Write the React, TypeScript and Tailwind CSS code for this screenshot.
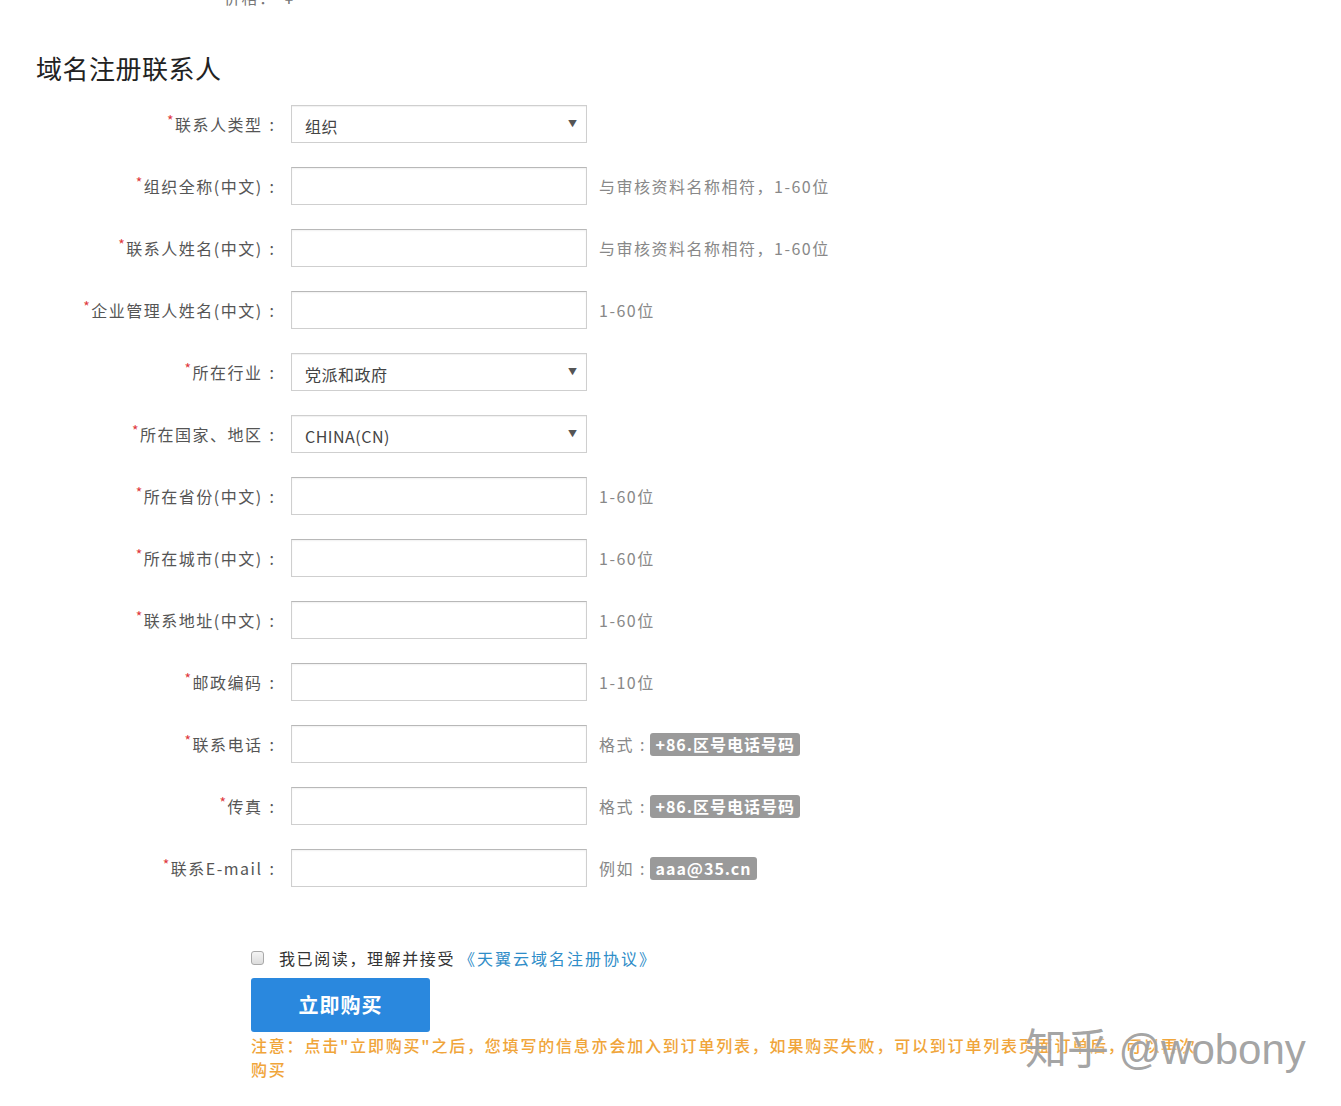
import React from 'react';

const FONT = '"Liberation Sans Narrow", "Noto Sans CJK SC", sans-serif';

type Row = {
  label: string;
  kind: 'select' | 'input';
  value?: string;
  hint?: string;
  badgePrefix?: string;
  badge?: string;
};

const rows: Row[] = [
  { label: '联系人类型', kind: 'select', value: '组织' },
  { label: '组织全称(中文)', kind: 'input', hint: '与审核资料名称相符，1-60位' },
  { label: '联系人姓名(中文)', kind: 'input', hint: '与审核资料名称相符，1-60位' },
  { label: '企业管理人姓名(中文)', kind: 'input', hint: '1-60位' },
  { label: '所在行业', kind: 'select', value: '党派和政府' },
  { label: '所在国家、地区', kind: 'select', value: 'CHINA(CN)' },
  { label: '所在省份(中文)', kind: 'input', hint: '1-60位' },
  { label: '所在城市(中文)', kind: 'input', hint: '1-60位' },
  { label: '联系地址(中文)', kind: 'input', hint: '1-60位' },
  { label: '邮政编码', kind: 'input', hint: '1-10位' },
  { label: '联系电话', kind: 'input', badgePrefix: '格式', badge: '+86.区号电话号码' },
  { label: '传真', kind: 'input', badgePrefix: '格式', badge: '+86.区号电话号码' },
  { label: '联系E-mail', kind: 'input', badgePrefix: '例如', badge: 'aaa@35.cn' },
];

function FormRow({ row }: { row: Row }) {
  return (
    <div className="flex items-center h-[38px]">
      <label className="w-[291px] pr-[17px] flex justify-end items-center text-[16px] tracking-[1.5px] text-[#555]">
        <span className="text-[#e0393e] text-[14px] self-start -mt-[2px]">*</span>
        <span>{row.label}</span>
        <span className="ml-[7px] tracking-normal">:</span>
      </label>
      {row.kind === 'select' ? (
        <div className="w-[296px] h-[38px] border border-[#cfcfcf] bg-white flex items-center justify-between pl-[13px] pr-[9px] shadow-[inset_0_1px_1px_rgba(0,0,0,0.06)]">
          <span className="text-[16px] text-[#444] pt-[3px] tracking-[0.5px]">{row.value}</span>
          <span className="text-[9px] text-[#555]">▼</span>
        </div>
      ) : (
        <input
          className="w-[296px] h-[38px] border border-[#cfcfcf] border-t-[#b8b8b8] bg-white outline-none shadow-[inset_0_1px_2px_rgba(0,0,0,0.06)]"
          style={{ fontFamily: FONT }}
        />
      )}
      {row.hint && (
        <span className="ml-3 text-[16px] tracking-[1.5px] text-[#888]">{row.hint}</span>
      )}
      {row.badge && (
        <span className="ml-3 flex items-center text-[16px] tracking-[1.5px] text-[#888]">
          {row.badgePrefix}
          <span className="ml-[6px] mr-[6px] tracking-normal">:</span>
          <span className="px-[5px] h-[23px] leading-[23px] rounded-[3px] bg-[#9a9a9a] text-white font-bold text-[16px] tracking-[1px]">
            {row.badge}
          </span>
        </span>
      )}
    </div>
  );
}

export default function App() {
  return (
    <div
      className="relative w-[1341px] h-[1106px] bg-white overflow-hidden"
      style={{ fontFamily: FONT }}
    >
      {/* 上一节被截断的价格行 */}
      <div className="h-[6px] overflow-hidden pl-[224px]">
        <div className="-mt-[15px] text-[16px] tracking-[1.5px] text-[#777]">价格：<span className="ml-2">¥</span></div>
      </div>

      <h2 className="mt-[46px] pl-[36px] text-[26px] leading-[32px] text-[#222] tracking-[0.5px]">
        域名注册联系人
      </h2>

      <div className="mt-[21px] flex flex-col gap-[24px]">
        {rows.map((r, i) => (
          <FormRow key={i} row={r} />
        ))}
      </div>

      <div className="pl-[251px] mt-[60px]">
        <div className="flex items-center h-[22px]">
          <span className="w-[13px] h-[14px] rounded-[3px] border border-[#a9a9a9] bg-gradient-to-b from-[#f4f4f4] to-[#dcdcdc]" />
          <span className="ml-[15px] text-[16px] tracking-[1.6px] text-[#333]">
            我已阅读，理解并接受
            <a className="ml-[4px] text-[#2f8dc8] tracking-[2px]">《天翼云域名注册协议》</a>
          </span>
        </div>
        <button className="mt-[9px] w-[179px] h-[54px] rounded-[3px] bg-[#2a88de] text-white text-[20px] font-bold tracking-[1px]">
          立即购买
        </button>
        <p className="mt-[1px] w-[950px] text-[16px] leading-[24px] tracking-[1.8px] text-[#f0a53a] font-medium">
          注意：点击"立即购买"之后，您填写的信息亦会加入到订单列表，如果购买失败，可以到订单列表页面订单后，可以再次购买
        </p>
      </div>

      {/* 水印 */}
      <div
        className="absolute left-[1025px] top-[1020px] text-[42px] leading-[52px] text-[#8c8c8c]/80 whitespace-nowrap [text-shadow:0_0_2px_#fff]"
        style={{ fontFamily: '"Noto Sans CJK SC", "Liberation Sans", sans-serif' }}
      >
        知乎 <span className="font-light" style={{ fontFamily: '"Liberation Sans", sans-serif' }}>@wobony</span>
      </div>
    </div>
  );
}
